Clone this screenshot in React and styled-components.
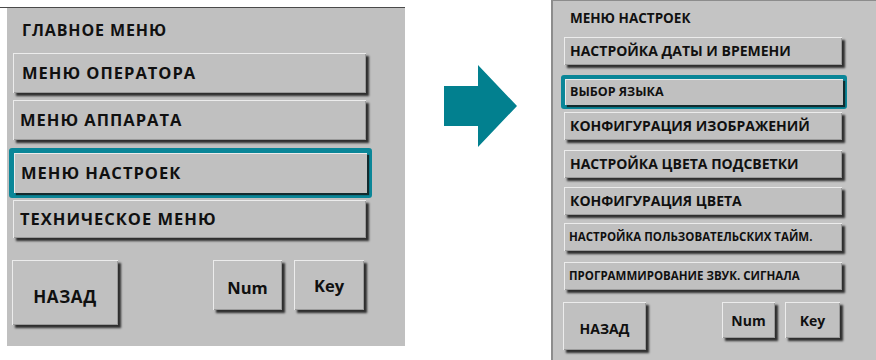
import React from "react";
import styled, { createGlobalStyle, css } from "styled-components";

const Global = createGlobalStyle`
  html, body { margin: 0; padding: 0; background: #ffffff; }
  body { width: 876px; height: 360px; overflow: hidden; font-family: "Open Sans", "Noto Sans", sans-serif; }
  * { box-sizing: border-box; }
`;

const Page = styled.div`
  display: flex;
  align-items: flex-start;
  width: 876px;
  height: 360px;
`;

const LeftFrame = styled.div`
  margin-top: 7px;
  width: 405px;
  border-top: 1px solid #4a4a4a;
  padding-left: 7px;
`;

const Panel = styled.div`
  background: ${(p) => p.$bg};
  display: flex;
  flex-direction: column;
`;

const LeftPanel = styled(Panel)`
  height: 338px;
  padding: 0 0 0 6px;
`;

const RightPanel = styled(Panel)`
  width: 325px;
  height: 360px;
  border-left: 2px solid #8c8c8c;
  border-top: 1px solid #8c8c8c;
  padding-left: 11px;
`;

const Title = styled.div`
  font-weight: 700;
  color: #111111;
  font-size: ${(p) => p.$size}px;
  line-height: ${(p) => p.$lh}px;
  margin-top: ${(p) => p.$mt}px;
  padding-left: ${(p) => p.$pl}px;
  letter-spacing: ${(p) => p.$ls || 0}px;
  white-space: nowrap;
`;

const buttonLook = css`
  background: #c0c0c0;
  box-shadow: inset 1px 1px 0 #ececec, inset -1px -1px 0 #9a9a9a, 3px 3px 2px rgba(20, 20, 20, 0.85);
  color: #101010;
  font-weight: 700;
  white-space: nowrap;
`;

const MenuButton = styled.div`
  ${buttonLook}
  display: flex;
  align-items: center;
  width: ${(p) => p.$w}px;
  height: ${(p) => p.$h}px;
  margin-top: ${(p) => p.$mt || 0}px;
  padding-left: ${(p) => p.$pl}px;
  padding-bottom: 2px;
  font-size: ${(p) => p.$fs}px;
  letter-spacing: ${(p) => p.$ls || 0}px;
`;

const Highlight = styled.div`
  border: ${(p) => p.$bw}px solid #0a8698;
  border-radius: 3px;
  padding: ${(p) => p.$pad}px;
  margin-top: ${(p) => p.$mt}px;
  margin-left: ${(p) => p.$ml}px;
  align-self: flex-start;
  & > div { margin-top: 0; box-shadow: inset 1px 1px 0 #ececec, 2px 2px 1px rgba(20,20,20,0.8); }
`;

const BottomRow = styled.div`
  display: flex;
  align-items: flex-start;
  margin-top: ${(p) => p.$mt}px;
  margin-left: ${(p) => p.$ml || 0}px;
  width: ${(p) => p.$w}px;
`;

const KeyButton = styled.div`
  ${buttonLook}
  display: flex;
  align-items: center;
  justify-content: center;
  width: ${(p) => p.$w}px;
  height: ${(p) => p.$h}px;
  margin-left: ${(p) => p.$ml || 0}px;
  font-size: ${(p) => p.$fs}px;
  padding-top: ${(p) => p.$pt || 0}px;
  letter-spacing: ${(p) => p.$ls || 0}px;
`;

const ArrowArea = styled.div`
  flex: 0 0 146px;
  display: flex;
  justify-content: center;
  padding-top: 65px;
  padding-left: 4px;
`;

function Arrow() {
  return (
    <svg width="73" height="82" viewBox="0 0 73 82">
      <polygon points="0,21 34,21 34,0 73,41 34,82 34,61 0,61" fill="#02808f" />
    </svg>
  );
}

export default function App() {
  return (
    <>
      <Global />
      <Page>
        <LeftFrame>
          <LeftPanel $bg="#c0c0c0">
            <Title $size={16} $lh={20} $mt={12} $pl={9} $ls={0.9}>ГЛАВНОЕ МЕНЮ</Title>
            <MenuButton $w={353} $h={40} $mt={13} $pl={9} $fs={16.5} $ls={1}>МЕНЮ ОПЕРАТОРА</MenuButton>
            <MenuButton $w={353} $h={40} $mt={7} $pl={7} $fs={16.5} $ls={1}>МЕНЮ АППАРАТА</MenuButton>
            <Highlight $bw={5} $pad={0} $mt={8} $ml={-4}>
              <MenuButton $w={353} $h={40} $pl={7} $fs={16.5} $ls={1}>МЕНЮ НАСТРОЕК</MenuButton>
            </Highlight>
            <MenuButton $w={353} $h={38} $mt={2} $pl={7} $fs={16.5} $ls={1}>ТЕХНИЧЕСКОЕ МЕНЮ</MenuButton>
            <BottomRow $mt={22} $ml={-1} $w={353}>
              <KeyButton $w={106} $h={65} $fs={17} $pt={8} $ls={0.6}>НАЗАД</KeyButton>
              <KeyButton $w={69} $h={50} $ml={95} $fs={16.5} $pt={4}>Num</KeyButton>
              <KeyButton $w={70} $h={50} $ml={12} $fs={16.5}>Key</KeyButton>
            </BottomRow>
          </LeftPanel>
        </LeftFrame>
        <ArrowArea>
          <Arrow />
        </ArrowArea>
        <RightPanel $bg="#c4c4c4">
          <Title $size={13.5} $lh={18} $mt={8} $pl={6}>МЕНЮ НАСТРОЕК</Title>
          <MenuButton $w={278} $h={28} $mt={10} $pl={6} $fs={14}>НАСТРОЙКА ДАТЫ И ВРЕМЕНИ</MenuButton>
          <Highlight $bw={4} $pad={0} $mt={10} $ml={-3}>
            <MenuButton $w={278} $h={26} $pl={5} $fs={12.5}>ВЫБОР ЯЗЫКА</MenuButton>
          </Highlight>
          <MenuButton $w={278} $h={28} $mt={3} $pl={6} $fs={14}>КОНФИГУРАЦИЯ ИЗОБРАЖЕНИЙ</MenuButton>
          <MenuButton $w={278} $h={28} $mt={10} $pl={6} $fs={14}>НАСТРОЙКА ЦВЕТА ПОДСВЕТКИ</MenuButton>
          <MenuButton $w={278} $h={28} $mt={9} $pl={6} $fs={14}>КОНФИГУРАЦИЯ ЦВЕТА</MenuButton>
          <MenuButton $w={278} $h={28} $mt={8} $pl={5} $fs={11.5}>НАСТРОЙКА ПОЛЬЗОВАТЕЛЬСКИХ ТАЙМ.</MenuButton>
          <MenuButton $w={278} $h={28} $mt={11} $pl={5} $fs={11.5}>ПРОГРАММИРОВАНИЕ ЗВУК. СИГНАЛА</MenuButton>
          <BottomRow $mt={12} $ml={-1} $w={278}>
            <KeyButton $w={83} $h={48} $fs={14} $pt={4}>НАЗАД</KeyButton>
            <KeyButton $w={53} $h={36} $ml={76} $fs={14}>Num</KeyButton>
            <KeyButton $w={55} $h={36} $ml={10} $fs={14}>Key</KeyButton>
          </BottomRow>
        </RightPanel>
      </Page>
    </>
  );
}
